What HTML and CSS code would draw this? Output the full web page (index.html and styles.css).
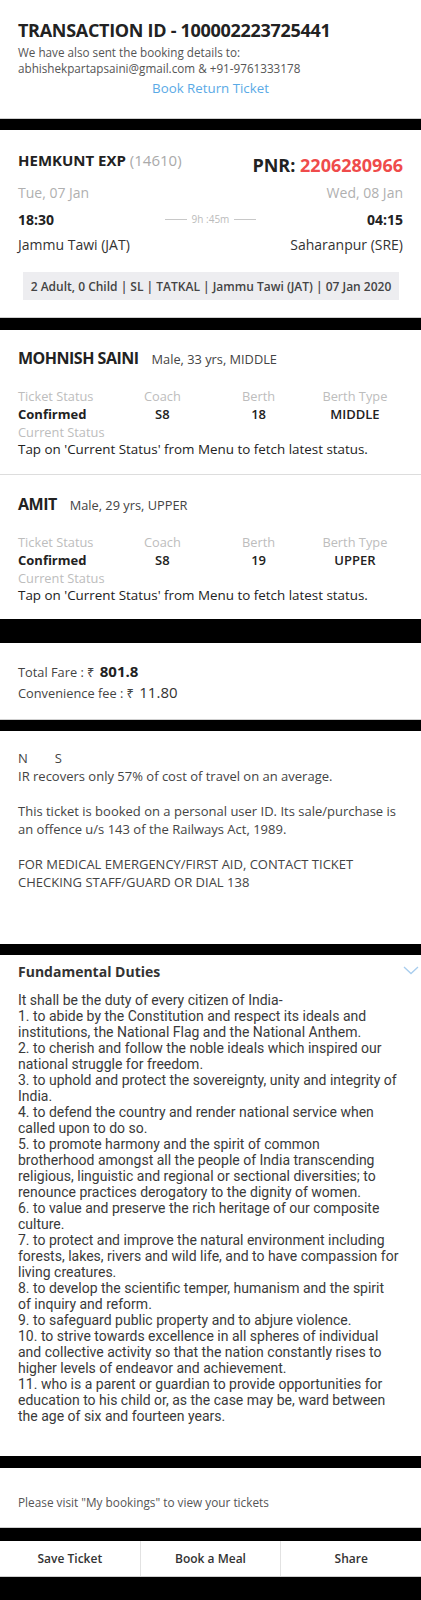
FILE: index.html
```html
<!DOCTYPE html>
<html>
<head>
<meta charset="utf-8">
<link rel="stylesheet" href="styles.css">
</head>
<body>
<div class="page">
  <section class="card txn">
    <h1 class="txn-title">TRANSACTION ID - 100002223725441</h1>
    <p class="txn-sub">We have also sent the booking details to:<br>abhishekpartapsaini@gmail.com &amp; +91-9761333178</p>
    <div class="txn-link">Book Return Ticket</div>
  </section>

  <section class="card journey">
    <div class="jr-head">
      <div class="train"><span class="train-name">HEMKUNT EXP</span> <span class="train-no">(14610)</span></div>
      <div class="pnr">PNR: <span class="pnr-no">2206280966</span></div>
    </div>
    <div class="jr-row dates">
      <span>Tue, 07 Jan</span>
      <span>Wed, 08 Jan</span>
    </div>
    <div class="jr-times">
      <span class="time">18:30</span>
      <span class="duration"><i class="dline"></i>9h :45m<i class="dline"></i></span>
      <span class="time right">04:15</span>
    </div>
    <div class="jr-row stations">
      <span>Jammu Tawi (JAT)</span>
      <span>Saharanpur (SRE)</span>
    </div>
    <div class="jr-info">2 Adult, 0 Child | SL | TATKAL | Jammu Tawi (JAT) | 07 Jan 2020</div>
  </section>

  <section class="card passengers">
    <div class="pax">
      <div class="pax-head"><span class="pax-name">MOHNISH SAINI</span><span class="pax-meta">Male, 33 yrs, MIDDLE</span></div>
      <div class="pax-grid">
        <span class="lbl">Ticket Status</span><span class="lbl c">Coach</span><span class="lbl c">Berth</span><span class="lbl c">Berth Type</span>
        <span class="val first">Confirmed</span><span class="val c">S8</span><span class="val c">18</span><span class="val c">MIDDLE</span>
      </div>
      <div class="lbl cur">Current Status</div>
      <div class="tap">Tap on 'Current Status' from Menu to fetch latest status.</div>
    </div>
    <div class="pax">
      <div class="pax-head"><span class="pax-name">AMIT</span><span class="pax-meta">Male, 29 yrs, UPPER</span></div>
      <div class="pax-grid">
        <span class="lbl">Ticket Status</span><span class="lbl c">Coach</span><span class="lbl c">Berth</span><span class="lbl c">Berth Type</span>
        <span class="val first">Confirmed</span><span class="val c">S8</span><span class="val c">19</span><span class="val c">UPPER</span>
      </div>
      <div class="lbl cur">Current Status</div>
      <div class="tap">Tap on 'Current Status' from Menu to fetch latest status.</div>
    </div>
  </section>

  <section class="card fare">
    <div class="fare-row">Total Fare : ₹ <b class="fare-amt">801.8</b></div>
    <div class="fare-row">Convenience fee : ₹ <span class="fee-amt">11.80</span></div>
  </section>

  <section class="card notes">
    <div>N<span class="ns-gap">S</span></div>
    <div>IR recovers only 57% of cost of travel on an average.</div>
    <div class="blank"></div>
    <div>This ticket is booked on a personal user ID. Its sale/purchase is an offence u/s 143 of the Railways Act, 1989.</div>
    <div class="blank"></div>
    <div>FOR MEDICAL EMERGENCY/FIRST AID, CONTACT TICKET CHECKING STAFF/GUARD OR DIAL 138</div>
  </section>

  <section class="card duties">
    <div class="duties-head">
      <span class="duties-title">Fundamental Duties</span>
      <svg class="chev" width="16" height="9" viewBox="0 0 16 9"><path d="M1 1 L8 7.5 L15 1" fill="none" stroke="#a8cdee" stroke-width="1.3"/></svg>
    </div>
    <div class="duties-body">It shall be the duty of every citizen of India-<br>1. to abide by the Constitution and respect its ideals and<br>institutions, the National Flag and the National Anthem.<br>2. to cherish and follow the noble ideals which inspired our<br>national struggle for freedom.<br>3. to uphold and protect the sovereignty, unity and integrity of<br>India.<br>4. to defend the country and render national service when<br>called upon to do so.<br>5. to promote harmony and the spirit of common<br>brotherhood amongst all the people of India transcending<br>religious, linguistic and regional or sectional diversities; to<br>renounce practices derogatory to the dignity of women.<br>6. to value and preserve the rich heritage of our composite<br>culture.<br>7. to protect and improve the natural environment including<br>forests, lakes, rivers and wild life, and to have compassion for<br>living creatures.<br>8. to develop the scientific temper, humanism and the spirit<br>of inquiry and reform.<br>9. to safeguard public property and to abjure violence.<br>10. to strive towards excellence in all spheres of individual<br>and collective activity so that the nation constantly rises to<br>higher levels of endeavor and achievement.<br>11. who is a parent or guardian to provide opportunities for<br>education to his child or, as the case may be, ward between<br>the age of six and fourteen years.</div>
  </section>

  <section class="card visit">
    <p>Please visit "My bookings" to view your tickets</p>
  </section>

  <nav class="actions">
    <button class="act">Save Ticket</button>
    <button class="act">Book a Meal</button>
    <button class="act">Share</button>
  </nav>
</div>
</body>
</html>
```

FILE: styles.css
```css
* { box-sizing: border-box; }
html, body { margin: 0; padding: 0; }
body {
  background: #000;
  font-family: "Open Sans", "Noto Sans", sans-serif;
  color: #333;
  width: 421px;
  height: 1600px;
  overflow: hidden;
}
.page { display: flex; flex-direction: column; }
.card {
  background: #fff;
  border-bottom: 1px solid #cfcfcf;
  padding: 0 18px;
}
p { margin: 0; }

/* transaction */
.txn { height: 119px; padding-top: 18px; margin-bottom: 11px; }
.txn-title { margin: 0; font-size: 18px; line-height: 24px; font-weight: 700; color: #222; letter-spacing: -0.3px; }
.txn-sub { font-size: 11.7px; line-height: 16px; color: #555; margin-top: 2px; }
.txn-link { text-align: center; color: #5aaae6; font-size: 13.3px; line-height: 18px; margin-top: 3px; }

/* journey */
.journey { height: 188px; padding-top: 20px; margin-bottom: 12px; }
.jr-head { display: flex; justify-content: space-between; align-items: flex-start; }
.train { font-size: 15px; line-height: 20px; }
.train-name { font-weight: 700; color: #222; }
.train-no { color: #aaa; }
.pnr { font-size: 18px; line-height: 24px; font-weight: 700; color: #222; margin-top: 3px; }
.pnr-no { color: #ef4b4b; }
.jr-row { display: flex; justify-content: space-between; font-size: 14px; line-height: 20px; }
.dates { color: #b0b0b0; margin-top: 6px; }
.jr-times { display: grid; grid-template-columns: 1fr auto 1fr; align-items: center; margin-top: 6px; height: 20px; }
.time { font-size: 14px; font-weight: 700; color: #222; }
.time.right { text-align: right; }
.duration { display: flex; align-items: center; gap: 5px; font-size: 10px; color: #bbb; }
.dline { display: block; width: 22px; height: 1px; background: #c8c8c8; }
.stations { color: #333; margin-top: 6px; }
.jr-info {
  margin: 17px 0 0 5px;
  width: 376px;
  height: 28px;
  background: #ededf0;
  font-size: 12px;
  font-weight: 600;
  color: #444;
  display: flex;
  align-items: center;
  justify-content: center;
}

/* passengers */
.passengers { padding: 0; margin-bottom: 24px; border-bottom: none; }
.pax { padding: 17px 18px 0; height: 144px; }
.pax + .pax { border-top: 1px solid #ddd; padding-top: 18px; height: 145px; }
.pax-head { display: flex; align-items: baseline; gap: 13px; line-height: 22px; }
.pax-name { font-size: 16px; font-weight: 700; color: #222; letter-spacing: -0.5px; }
.pax-meta { font-size: 12.8px; color: #444; }
.pax-grid { display: grid; grid-template-columns: repeat(4, 1fr); margin-top: 17px; font-size: 12.8px; line-height: 18px; }
.c { text-align: center; }
.lbl { color: #bdbdbd; font-size: 12.8px; }
.val { font-weight: 600; color: #222; font-size: 13px; }
.val.first { font-weight: 700; }
.cur { line-height: 18px; }
.tap { font-size: 13.4px; line-height: 16px; color: #222; }

/* fare */
.fare { height: 77px; padding-top: 18px; margin-bottom: 11px; }
.fare-row { font-size: 12.8px; line-height: 20px; color: #444; }
.fare-amt { font-size: 15px; font-weight: 700; color: #222; margin-left: 2px; }
.fee-amt { font-size: 15px; color: #333; margin-left: 2px; }

/* notes */
.notes { height: 213px; padding-top: 19px; font-size: 13px; line-height: 17.7px; color: #444; border-bottom: none; margin-bottom: 11px; }
.ns-gap { margin-left: 27px; }
.blank { height: 17.7px; }

/* duties */
.duties { height: 501px; padding-top: 7px; border-bottom: none; margin-bottom: 12px; }
.duties-head { display: flex; justify-content: space-between; align-items: flex-start; height: 30px; }
.duties-title { font-size: 14px; line-height: 20px; font-weight: 700; color: #333; }
.chev { margin-top: 4px; margin-right: -16px; }
.duties-body { font-family: Roboto, "Noto Sans", sans-serif; font-size: 14px; line-height: normal; color: #3a3a3a; white-space: nowrap; }

/* visit */
.visit { height: 60px; padding-top: 25px; margin-bottom: 13px; }
.visit p { font-size: 11.8px; line-height: 18px; color: #555; }

/* actions */
.actions { display: flex; background: #fff; height: 36px; border-bottom: 1px solid #cfcfcf; }
.act {
  flex: 1;
  border: none;
  background: #fff;
  border-left: 1px solid #e2e2e2;
  font-family: "Open Sans", sans-serif;
  font-size: 12px;
  font-weight: 600;
  color: #333;
  padding: 0;
}
.act:first-child { border-left: none; }
```
